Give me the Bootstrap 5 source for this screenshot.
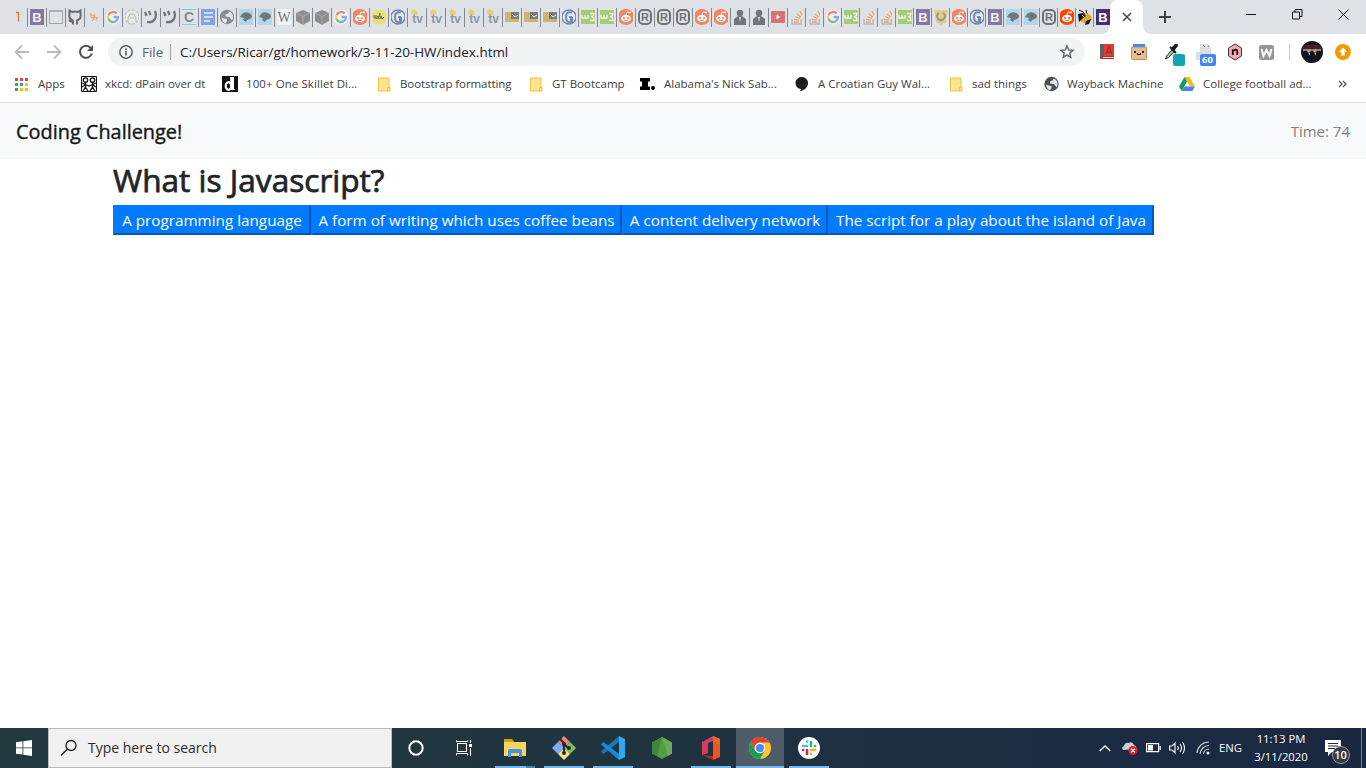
<!DOCTYPE html>
<html lang="en">
<head>
<meta charset="utf-8">
<title>Coding Challenge!</title>
<link rel="stylesheet" href="https://cdn.jsdelivr.net/npm/bootstrap@5.3.0/dist/css/bootstrap.min.css">
<style>
html,body{height:100%;overflow:hidden}
body{font-family:"Open Sans","Noto Sans",sans-serif;color:#212529;background:#fff}
svg{display:block;flex:none;overflow:hidden}
span,button,a,h1{white-space:nowrap}
.tabstrip{height:34px;background:#dee1e6}
.first-tab{width:28px;height:34px;overflow:hidden}
.mini-tab{height:34px;width:19px;padding-left:2px;position:relative}
.mini-tab::before{content:"";position:absolute;left:-1px;top:8px;width:1px;height:19px;background:#85878b}
.mini-tab.slim{width:18px}
.mini-tab svg{opacity:.58}
.mini-tab.fresh svg{opacity:1}
.open-tab{width:33px;margin-left:-2px;height:34px;background:#fff;border-radius:8px 8px 0 0;position:relative}
.open-tab::before,.open-tab::after{content:"";position:absolute;bottom:0;width:8px;height:8px}
.open-tab::before{left:-8px;background:radial-gradient(circle at 0 0,transparent 7.5px,#fff 8px)}
.open-tab::after{right:-8px;background:radial-gradient(circle at 100% 0,transparent 7.5px,#fff 8px)}
.window-buttons{padding:9px 17px 0 0;gap:35px}
.toolbar{height:36px;display:grid;grid-template-columns:6px 32px 32px 32px 6px 977px 8px 27px 37px 33px 30px 29px 34px 13px 32px 30px;background:#fff}
.toolbar>*{justify-self:center}
.omni{height:28px;border-radius:14px;background:#f1f3f4;width:977px;padding:0 10px;font-size:13.45px}
.omni span{line-height:20px}
.omni .scheme{color:#5f6368;margin-left:8px;width:22px}
.omni .bar{width:1px;height:16px;background:#9aa0a6;margin:0 9px 0 6px}
.omni .url{color:#202124}
.ext-tag{position:absolute;right:-5px;bottom:-6px;width:12px;height:12px;border-radius:2px;background:#18a2b8}
.ext-tag.num{background:#4285f4;color:#fff;font:bold 9.5px/12px "Open Sans",sans-serif;width:16px;text-align:center;padding:0}
.bookmarks{height:33px;border-bottom:1px solid #dadce0;padding-left:15px;display:grid;grid-template-columns:66px 141px 156px 152px 110px 155px 155px 94px 135px 159px 20px;font-size:11.5px;color:#3c4043;background:#fff;padding-bottom:4px}
.bookmarks>span{display:flex;align-items:center}
.bookmarks i{font-style:normal}
.page-nav{height:56px;background:#f8f9fa;padding:0 16px}
.page-nav .title{font-size:19.9px;-webkit-text-stroke:.4px;color:#161819;line-height:24px;padding-top:1px}
.page-nav .timer{font-size:15px;color:#808080}
.quiz{max-width:1140px;padding:0}
.quiz h1{font-size:31.6px;font-weight:400;-webkit-text-stroke:.75px;line-height:38px;margin:2px 0 6px}
.answers{display:grid;grid-template-columns:198px 311px 206px 326px}
.answers button{height:30px;border:2px solid;border-color:#007bff #0056b3 #0056b3 #007bff;background:#007bff;color:#fff;font-size:15.25px;line-height:20px;padding:3px 0}
.taskbar{height:40px;background:linear-gradient(90deg,#21393f,#20343f 45%,#1b2a43 85%,#1a2740)}
.start{width:48px}
.search{width:344px;height:40px;background:#f1f1f1;border:1px solid #bcbcbc;padding-left:11px;font-size:14px;color:#2b2b2b}
.search span{margin-left:10px;line-height:20px}
.sys{width:48px}
.app{width:49px;height:40px;position:relative}
.app.running::after{content:"";position:absolute;left:5px;width:40px;height:2px;bottom:0;background:#76b9ed}
.app.current{width:48px;margin-left:1px;background:#4d5c67}
.app.current::after{left:0;width:48px}
.app.many::before{content:"";position:absolute;left:36px;width:9px;height:2px;bottom:0;background:#56819f;z-index:1}
.tray{display:grid;grid-template-columns:24px 24px 24px 25px 25px 31px 70px 35px 15px;width:273px;height:40px;color:#fff;font-size:11.3px}
.tray>*{align-self:center;justify-self:center}
.clock{line-height:18px;text-align:center}
.note{left:-1px}
.note-count{position:absolute;left:7px;top:6px;width:18px;height:18px;border-radius:50%;background:#343b43;border:1px solid #8d949c;font-size:11px;font-weight:600;line-height:16px;text-align:center}
</style>
</head>
<body class="d-flex flex-column">
<header>
  <div class="tabstrip d-flex" id="tabs">
    <div class="first-tab d-flex align-items-center"><svg width="28" height="34"><path d="M16 12.500h2.500v9" fill="none" stroke="#c77b3c" stroke-width="1.300"/></svg></div>
    <div class="open-tab d-flex align-items-center justify-content-center" id="openTab"><svg width="10" height="10" viewBox="0 0 10 10"><path d="M1 1l8 8M9 1l-8 8" stroke="#46494d" stroke-width="1.600"/></svg></div>
    <svg class="align-self-center ms-3" width="12" height="12" viewBox="0 0 12 12"><path d="M6 0v12M0 6h12" stroke="#3c4043" stroke-width="2"/></svg>
    <div class="window-buttons d-flex ms-auto">
      <svg width="11" height="12"><path d="M0 5.500h10" stroke="#111"/></svg>
      <svg width="11" height="11" viewBox="0 0 11 11"><path d="M.5 3h7v7h-7zM3 3V.500h7v7H7.500" fill="none" stroke="#111"/></svg>
      <svg width="11" height="11" viewBox="0 0 11 11"><path d="M.5.500l10 10M10.500.500l-10 10" stroke="#111"/></svg>
    </div>
  </div>

  <div class="toolbar align-items-center">
    <i></i>
    <svg width="16" height="16" viewBox="0 0 16 16"><path d="M15 8H2M8 1.500L1.500 8 8 14.500" fill="none" stroke="#b9bbbe" stroke-width="1.800"/></svg>
    <svg width="16" height="16" viewBox="0 0 16 16"><path d="M1 8h13M8 1.500L14.500 8 8 14.500" fill="none" stroke="#b9bbbe" stroke-width="1.800"/></svg>
    <svg width="16" height="16" viewBox="0 0 16 16"><path d="M12.700 4A6 6 0 1 0 13.800 9.500" fill="none" stroke="#4b4f54" stroke-width="2"/><path d="M15 1v6H9z" fill="#4b4f54"/></svg>
    <i></i>
    <div class="omni d-flex align-items-center">
      <svg width="16" height="16" viewBox="0 0 16 16"><circle cx="8" cy="8" r="6.200" fill="none" stroke="#5f6368" stroke-width="1.500"/><path d="M8 7v4.500M8 4.300V6" stroke="#5f6368" stroke-width="1.600"/></svg>
      <span class="scheme">File</span><i class="bar"></i><span class="url">C:/Users/Ricar/gt/homework/3-11-20-HW/index.html</span>
      <svg class="ms-auto" width="16" height="16" viewBox="0 0 16 16"><path d="M8 2l1.700 3.900 4.300.400-3.200 2.800 1 4.200L8 11.100l-3.800 2.200 1-4.200L2 6.300l4.300-.400z" fill="none" stroke="#5f6368" stroke-width="1.400"/></svg>
    </div>
    <i></i>
    <svg width="14" height="16" viewBox="0 0 14 16"><path d="M0 0h4v13l2 2H0z" fill="#5d6065"/><path d="M4 0h10v12H4z" fill="#dc3e32"/><path d="M2 12h12v3H2z" fill="#b92d25"/><path d="M3 13.500h11" stroke="#ddd"/><path d="M6 10l3-7 3 7M7 8h4" fill="none" stroke="#a92b24" stroke-width="1.300"/></svg>
    <svg width="16" height="16" viewBox="0 0 16 16"><path d="M2 0h12v4H2z" fill="#2196f3"/><rect x=".5" y="3" width="15" height="12.500" rx="1" fill="#e9bb91" stroke="#c0895a"/><path d="M3 7h2v2H3zM11 7h2v2h-2zM6 9h1v1h2V9h1v2H6z" fill="#222"/></svg>
    <div class="position-relative" style="left:-2px"><svg width="16" height="16" viewBox="0 0 16 16"><path d="M1.500 15l1-3L8 6l2 2-5.500 5.500z" fill="#8fc7a2" stroke="#274637"/><path d="M7 4l4-4q3-1 3 2l-4 5z" fill="#16191b"/><path d="M6 3l6 6" stroke="#16191b" stroke-width="2"/></svg><i class="ext-tag"></i></div>
    <div class="position-relative" style="left:-2px"><svg width="15" height="16" viewBox="0 0 15 16"><path d="M4 0h8l3 4v12H0V8h4z" fill="#dedede"/><path d="M7 1l2 2M13 1l-1 2" stroke="#888"/></svg><span class="ext-tag num">60</span></div>
    <svg width="16" height="18" viewBox="0 0 16 18"><path d="M8 1l6.500 4v8L8 17l-6.500-4V5z" fill="#f7a8b8" stroke="#4c3038"/><path d="M5.800 12V6.500M5.800 8q4.500-3 4.500 1v3" fill="none" stroke="#17090c" stroke-width="1.800"/></svg>
    <svg width="15" height="15" viewBox="0 0 15 15"><rect width="15" height="15" rx="2.500" fill="#969696"/><path d="M2.500 4l2 7 3-6 3 6 2-7" fill="none" stroke="#fff" stroke-width="2"/></svg>
    <svg width="1" height="16"><path fill="#c9cbce" d="M0 0h1v16H0z"/></svg>
    <svg width="22" height="22" viewBox="0 0 22 22"><defs><clipPath id="face"><circle cx="11" cy="11" r="11"/></clipPath></defs><g clip-path="url(#face)"><path d="M0 0h22v22H0z" fill="#171319"/><path d="M0 4h22v4H0z" fill="#43202b"/><path d="M2 8h18v2H2z" fill="#867e80"/><circle cx="8" cy="10" r="1.700" fill="#caa187"/><circle cx="14" cy="10" r="1.700" fill="#caa187"/><path d="M5 12h6v10H5z" fill="#0a1627"/><path d="M7.500 12l.8 3 .8-3M13.500 12l.8 3 .8-3" fill="#e5d0a4"/></g></svg>
    <svg width="16" height="16" viewBox="0 0 16 16"><circle cx="8" cy="8" r="8" fill="#f29900"/><path d="M8 3.500L12 8h-2.200v3.500H6.200V8H4z" fill="#fff"/></svg>
  </div>

  <div class="bookmarks">
    <span><svg width="13" height="13" viewBox="0 0 13 13"><path d="M0 0h3v3H0zM5 0h3v3H5zM10 0h3v3h-3z" fill="#ea4335"/><path d="M0 5h3v3H0zM0 10h3v3H0z" fill="#34a853"/><path d="M5 5h3v3H5z" fill="#4285f4"/><path d="M10 5h3v3h-3zM5 10h3v3H5zM10 10h3v3h-3z" fill="#fbbc05"/></svg><i style="margin-left:10px">Apps</i></span>
    <span><svg width="16" height="16" viewBox="0 0 16 16"><path d="M.500.500h15v15H.500z" fill="#fff" stroke="#111"/><g fill="none" stroke="#111" stroke-width="1.300"><circle cx="4.500" cy="4" r="2.200"/><circle cx="11.500" cy="4" r="2.200"/><path d="M1 7l7 3 7-3M4.500 6v5L2 15M4.500 11L7 15M11.500 6v5L9 15M11.500 11l2.500 4M1 11l3-2M15 11l-3-2"/></g></svg><i class="ms-2" style="letter-spacing:-.08px">xkcd: dPain over dt</i></span>
    <span><svg width="16" height="16" viewBox="0 0 16 16"><path d="M0 0h16v16H0z" fill="#111"/><path d="M8 1h4v12l1.500 1H9z" fill="#fff"/><ellipse cx="6.500" cy="10" rx="2.800" ry="3.800" fill="none" stroke="#fff" stroke-width="2.200"/></svg><i class="ms-2" style="letter-spacing:.08px">100+ One Skillet Di...</i></span>
    <span><svg width="13" height="15"><use href="#folder"/></svg><i style="margin-left:9px;letter-spacing:-.08px">Bootstrap formatting</i></span>
    <span><svg width="13" height="15"><use href="#folder"/></svg><i style="margin-left:9px">GT Bootcamp</i></span>
    <span><svg width="16" height="14" viewBox="0 0 16 14"><path d="M0 1h10v3.500H8v5h2V13H0V9.500h2v-5H0z" fill="#000"/><circle cx="13" cy="11" r="2" fill="#000"/></svg><i class="ms-2">Alabama's Nick Sab...</i></span>
    <span><svg width="14" height="16" viewBox="0 0 14 16"><path d="M7 1a6 6 0 0 1 6 6c0 4-3 7-8 8.500l1-2.500A6 6 0 0 1 7 1z" fill="#1d1d1d"/></svg><i style="margin-left:9px">A Croatian Guy Wal...</i></span>
    <span><svg width="13" height="15"><use href="#folder"/></svg><i style="margin-left:9px">sad things</i></span>
    <span><svg width="15" height="16" viewBox="0.5 0 15 16"><use href="#globe"/></svg><i class="ms-2">Wayback Machine</i></span>
    <span><svg width="16" height="14" viewBox="0 0 16 14"><path d="M5.500 0h5L16 9.500h-5z" fill="#fbbc05"/><path d="M5.500 0L0 9.500 2.700 14 8 4.500z" fill="#0f9d58"/><path d="M5.300 9.500H16L13.300 14H2.700z" fill="#4285f4"/></svg><i class="ms-2">College football ad...</i></span>
    <svg class="align-self-center" width="9" height="8" viewBox="0 0 9 8"><path d="M1 1l3 3-3 3M5 1l3 3-3 3" fill="none" stroke="#55585c" stroke-width="1.400"/></svg>
  </div>
</header>

<nav class="page-nav navbar navbar-light">
  <span class="title">Coding Challenge!</span>
  <span class="timer">Time: 74</span>
</nav>
<main class="container quiz flex-grow-1">
  <h1>What is Javascript?</h1>
  <div class="answers">
    <button type="button">A programming language</button>
    <button type="button">A form of writing which uses coffee beans</button>
    <button type="button">A content delivery network</button>
    <button type="button">The script for a play about the island of Java</button>
  </div>
</main>

<footer class="taskbar d-flex align-items-center">
  <div class="start d-flex justify-content-center"><svg width="16" height="16" viewBox="0 0 16 16"><path d="M0 2.200l6.500-.900v6.200H0zM7.300 1.200L16 0v7.500H7.300zM0 8.300h6.500v6.300L0 13.700zM7.300 8.300H16V16l-8.700-1.200z" fill="#fff"/></svg></div>
  <div class="search d-flex align-items-center"><svg width="18" height="18" viewBox="0 0 18 18"><circle cx="11" cy="6.500" r="5" fill="none" stroke="#222" stroke-width="1.300"/><path d="M7.500 10L1 16.500" stroke="#222" stroke-width="1.500"/></svg><span>Type here to search</span></div>
  <div class="sys d-flex justify-content-center"><svg width="16" height="16" viewBox="0 0 16 16"><circle cx="8" cy="8" r="6.700" fill="none" stroke="#fff" stroke-width="2"/></svg></div>
  <div class="sys d-flex justify-content-center me-1"><svg width="17" height="16" viewBox="0 0 17 16"><path d="M1.500 3.500h9v8h-9zM.500 2V.500M11.500 2V.500M.500.500v1h11M.500 15.500v-2h11v2M14.500 0v3M14.500 8v8" fill="none" stroke="#fff" stroke-width="1.100"/><path d="M13 4h3v3h-3z" fill="#fff"/></svg></div>
  <div class="app running many d-flex align-items-center justify-content-center" style="margin-left:-2px"><svg width="22" height="20" viewBox="0 0 22 20"><path d="M0 1h8l2 2v3H0z" fill="#d99a13"/><path d="M0 4h22v14H0z" fill="#fcd362"/><path d="M4 19v-6q0-2 2-2h10q2 0 2 2v6h-3v-4H7v4z" fill="#3f99dd"/></svg></div>
  <div class="app running d-flex align-items-center justify-content-center"><svg width="24" height="24" viewBox="0 0 24 24"><path d="M12 0l6 6-6 6-6-6z" fill="#fa7e7e"/><path d="M6 6l6 6-6 6-6-6z" fill="#7fabf5"/><path d="M18 6l6 6-6 6-6-6z" fill="#7bc258"/><path d="M12 12l6 6-6 6-6-6z" fill="#fbe180"/><path d="M8 3l4 4v11M12 8l5 5" fill="none" stroke="#202a2d" stroke-width="2"/><circle cx="12" cy="8" r="2" fill="#202a2d"/><circle cx="12" cy="17" r="2" fill="#202a2d"/><circle cx="17" cy="12" r="2" fill="#202a2d"/></svg></div>
  <div class="app running d-flex align-items-center justify-content-center"><svg width="24" height="24" viewBox="0 0 24 24"><path d="M18 0v6L2.500 18 0 15.500z" fill="#1478bd"/><path d="M0 8.500L2.500 6 18 18v6z" fill="#168bd7"/><path d="M18 0l6 3v18l-6 3z" fill="#2fa8f4"/></svg></div>
  <div class="app d-flex align-items-center justify-content-center"><svg width="22" height="24" viewBox="0 0 22 24"><path d="M11 1l10 5.500v11L11 23 1 17.500v-11z" fill="#539e43"/><path d="M11 1L1 6.500v11L6 20z" fill="#3e863d"/><path d="M11 1l10 5.500v11L17 20z" fill="#6aaa58"/></svg></div>
  <div class="app running d-flex align-items-center justify-content-center"><svg width="20" height="24" viewBox="0 0 20 24"><path d="M1 6l11-6v5L7 7v10l-6 2z" fill="#d53c60"/><path d="M12 0l7 3v18l-7 3V5z" fill="#ed5526"/><path d="M12 0l7 3v6l-7-4z" fill="#e46a21"/><path d="M1 19l11 1v4z" fill="#bd221d"/></svg></div>
  <div class="app running current d-flex align-items-center justify-content-center"><svg width="22" height="22" viewBox="0 0 22 22"><circle cx="11" cy="11" r="11" fill="#fbc52d"/><path d="M1.500 5.500A11 11 0 0 1 20.500 5.500H11A5.500 5.500 0 0 0 6.200 13.700z" fill="#dc4437"/><path d="M1.500 5.500A11 11 0 0 0 11 22l4.700-8.300H6.200z" fill="#199c58"/><circle cx="11" cy="11" r="5.200" fill="#fff"/><circle cx="11" cy="11" r="4.100" fill="#4a89ee"/></svg></div>
  <div class="app running d-flex align-items-center justify-content-center"><svg width="22" height="22" viewBox="0 0 22 22"><circle cx="11" cy="11" r="11" fill="#fff"/><g stroke-width="2.600" stroke-linecap="round"><path d="M9 4.500v.100M5 9h4" stroke="#36c5f0"/><path d="M13 5v4M17 9h.100" stroke="#2eb67d"/><path d="M13 13h4M13 17v.100" stroke="#ecb22e"/><path d="M9 13v4M5 13h.100" stroke="#e01e5a"/></g></svg></div>

  <div class="tray ms-auto">
    <svg width="12" height="7" viewBox="0 0 12 7"><path d="M.700 6L6 1l5.300 5" fill="none" stroke="#fff" stroke-width="1.300"/></svg>
    <svg width="17" height="14" viewBox="0 0 17 14"><path d="M2 9q-2-3 1-4 1-4 5-3 3-2 5 2 3 1 2 4z" fill="#c9cdd1"/><circle cx="12" cy="9.500" r="4.500" fill="#df242c"/><path d="M10.200 7.700l3.600 3.600M13.800 7.700l-3.600 3.600" stroke="#fff" stroke-width="1.200"/></svg>
    <svg width="15" height="10" viewBox="0 0 15 10"><path d="M.600.600h12v8H.600zM14.200 3v4" fill="none" stroke="#fff" stroke-width="1.200"/><path d="M2 2h5v5.500H2z" fill="#fff"/></svg>
    <svg width="17" height="14" viewBox="0 0 17 14"><path d="M.600 5h2.500L6 2v10L3.100 9H.600zM8.500 5q1.500 2 0 4M11 3q3 4 0 8M13.500 1q4 6 0 12" fill="none" stroke="#fff" stroke-width="1.100"/></svg>
    <svg width="14" height="14" viewBox="0 0 14 14"><path d="M1 12A12 12 0 0 1 13 1M4 13a9 9 0 0 1 9-8.500M7.500 13A5.500 5.500 0 0 1 13 8" fill="none" stroke="#cfd5dc" stroke-width="1.200"/><circle cx="12" cy="12" r="1.500" fill="#fff"/></svg>
    <span>ENG</span>
    <div class="clock"><div>11:13 PM</div><div>3/11/2020</div></div>
    <div class="note position-relative"><svg width="16" height="16" viewBox="0 0 16 16"><path d="M0 0h16v12H7l-4 4v-4H0z" fill="#fff"/><path d="M3 3.500h10M3 6h10M3 8.500h7" stroke="#1b2a43"/></svg><span class="note-count">10</span></div>
    <svg width="1" height="40" style="justify-self:end;margin-right:4px"><path d="M0 0h1v40H0z" fill="#78828e"/></svg>
  </div>
</footer>

<svg width="0" height="0" class="position-absolute">
  <defs>
    <g id="folder"><path d="M.500 1h10.500v9.500h1v3.500H.500z" fill="#ffe48f" stroke="#e9c442"/><path d="M9.500 14v-3.500h1.500" fill="none" stroke="#e9c442"/></g>
    <g id="globe"><circle cx="8" cy="8" r="7.200" fill="#4b4f54"/><path d="M2.500 8.500L5 9.500l3 .5v2l-1.500 2.500Q3 13 2.500 8.500zM10 2.500l-1 2-2.500 1v2l4 .5 1.500 2 1 1.500Q15 8 13 4.500 11.500 3 10 2.500z" fill="#e6e8ea"/></g>
  </defs>
</svg>

<script src="https://cdn.jsdelivr.net/npm/bootstrap@5.3.0/dist/js/bootstrap.bundle.min.js"></script>
<script>
const glyph = (t, x, y, s, c, f = 'Liberation Sans') => `<text x="${x}" y="${y}" text-anchor="middle" font-family="${f}" font-weight="bold" font-size="${s}" fill="${c}">${t}</text>`;
const icons = {
  boot: '<path d="M1 0h14v16H1z" fill="#472c72"/>' + glyph('B', 8, 13, 13, '#fff'),
  pane: '<path d="M1.500 1.500h13v13h-13z" fill="none" stroke="#777"/><path d="M1 1h14v2H1z" fill="#888"/>',
  cat: '<path d="M6 15.500v-3q-3 .500-3.500-2M6 11.500Q1.500 10 2.500 5V1.500L5 3q3-1 6 0l2.500-1.500V5q1 5-3.500 6.500v4" fill="none" stroke="#16191d" stroke-width="2"/>',
  spark: '<path d="M5 4v3l3-1M5 9l3-1v3M9 5l-1 3 4 1M6 12l2-3M10 11l1-2" fill="none" stroke="#d49220" stroke-width="1.300"/>',
  goog: '<circle cx="8" cy="8" r="7.500" fill="#fff"/><g fill="none" stroke-width="2.300"><path d="M11.700 4.500A5 5 0 0 0 3.500 6" stroke="#ea4335"/><path d="M3.500 6a5 5 0 0 0 0 4" stroke="#fbbc05"/><path d="M3.500 10a5 5 0 0 0 7.500 2" stroke="#34a853"/><path d="M11 12q2-1.500 2-4H8.500" stroke="#4285f4"/></g>',
  ape: '<circle cx="8" cy="8" r="7" fill="#f5f5f0" stroke="#7aac80" stroke-dasharray="3 1"/><path d="M4 13V9l2-4h4l2 4v4M6 9h4" fill="none" stroke="#879981"/>',
  swirl: '<path d="M2 3l1.500 4M6 2l1.500 4M4 13q5 1 7.500-2.500T12 2" fill="none" stroke="#23272b" stroke-width="2.200"/>',
  cee: '<path d="M1 .5h14M1 15.500h14" stroke="#39c5d9"/>' + glyph('C', 8, 13, 14, '#45494d'),
  docs: '<path d="M1 0h14v16H1z" fill="#3f78ea"/><path d="M4 4h9M4 8h9M4 12h6" stroke="#fff" stroke-width="1.600"/>',
  globe: '<use href="#globe"/>',
  bird: '<path d="M0 0h16v16H0z" fill="#91d0ed"/><path d="M2 8l2-3q3-3 7-1 3 1 3 4l-2 2-3 1-1 2-3-2 1-2z" fill="#202a32"/>',
  wiki: '<path d="M0 0h16v16H0z" fill="#fff"/><text x="8" y="13" text-anchor="middle" font-family="Liberation Serif" font-size="14" fill="#222">W</text>',
  cube: '<path d="M8 1l7 3v8l-7 4-7-4V4z" fill="#525252"/><path d="M1 4l7 3.500L15 4M8 7v9" fill="none" stroke="#848484"/>',
  snoo: '<circle cx="8" cy="8" r="8" fill="#ff4500"/><ellipse cx="8" cy="9.500" rx="5" ry="3.700" fill="#fff"/><path d="M8 6l1-3 3 .500" fill="none" stroke="#fff"/><circle cx="12" cy="3.500" r="1" fill="#fff"/><circle cx="6" cy="9" r="1" fill="#ff4500"/><circle cx="10" cy="9" r="1" fill="#ff4500"/><path d="M6 11q2 1 4 0" fill="none" stroke="#ff4500"/>',
  sun: '<circle cx="8" cy="8" r="7.500" fill="#f7df18"/><path d="M3 6v3q2 1 2-3v4l2-3v3l2-6v6l1-3 1 3 2-2" fill="none" stroke="#222"/>',
  ring: '<circle cx="8" cy="8" r="7" fill="#e8edf3" stroke="#234a86" stroke-width="1.500"/><path d="M11 3.500Q5 2 5 8t5 5V8H8M11 8v6" fill="none" stroke="#234a86" stroke-width="2"/>',
  tv: '<path d="M2 2l3-2 4 3-1 3H3z" fill="#edc520"/>' + glyph('tv', 8.500, 13.500, 12, '#4d6679'),
  gold: '<path d="M0 3h16v10H0z" fill="#bc9621"/><path d="M7 3h9v7H7z" fill="#343434"/><path d="M8 5l3 3 3-2" stroke="#eee" fill="none"/>',
  wthree: '<path d="M0 1h16v14H0z" fill="#7fbd22"/><path d="M2 6v3h3V6M5 9h3V6M10 4.500h4q0 3-3 3 3 0 3 4h-4" fill="none" stroke="#fff" stroke-width="1.300"/>',
  err: '<rect x="2" y="1" width="12" height="14" rx="4" fill="none" stroke="#222" stroke-width="2"/>' + glyph('R', 8, 12, 11, '#222'),
  man: '<circle cx="8" cy="4" r="3.300" fill="#262a2d"/><path d="M2 16V10l4-3h4l4 3v6z" fill="#262a2d"/><path d="M7 8h2l-1 5z" fill="#ddd"/>',
  tube: '<rect x="1" y="2" width="14" height="12" rx="1" fill="#d42027"/><path d="M6.500 5.500l4 2.500-4 2.500z" fill="#fff"/>',
  stack: '<path d="M3 10v5h9v-5" fill="none" stroke="#999" stroke-width="1.400"/><path d="M5 13h5M5 10.500l5 .700M6 7.500l5 2M8 5l4 3M11 2l2 4" stroke="#f48024" stroke-width="1.300"/>',
  laurel: '<path d="M1 1h14l-2 12-5 3-5-3z" fill="#e7c13e"/><path d="M6 3.500q-5 5 2 8 7-3 2-8" fill="none" stroke="#676955" stroke-width="2"/>',
  bee: '<path d="M2 1l4 2 3 3M9 1l1 4" fill="none" stroke="#111"/><ellipse cx="9" cy="9.500" rx="6" ry="5" fill="#e5a924"/><path d="M1 5l5-1 3 3-3 2-4 4zM9 12l5-2-2 5-4 1z" fill="#171717"/><path d="M5 6l2 2" stroke="#fff"/>'
};
const order = ('boot pane cat spark goog ape swirl swirl cee docs globe bird bird wiki cube cube goog snoo sun ring tv tv tv tv tv ' +
  'gold gold gold ring wthree wthree snoo err err err snoo snoo man man tube stack stack goog wthree stack stack wthree boot laurel snoo ring boot bird bird err snoo bee boot').split(' ');
const openTab = document.getElementById('openTab');
order.forEach((name, i) => {
  const tab = document.createElement('div');
  tab.className = 'mini-tab d-flex align-items-center' + (i >= 40 ? ' slim' : '') + (i >= order.length - 3 ? ' fresh' : '');
  tab.innerHTML = `<svg width="14" height="16" viewBox="1 0 14 16">${icons[name]}</svg>`;
  openTab.before(tab);
});
</script>
</body>
</html>
